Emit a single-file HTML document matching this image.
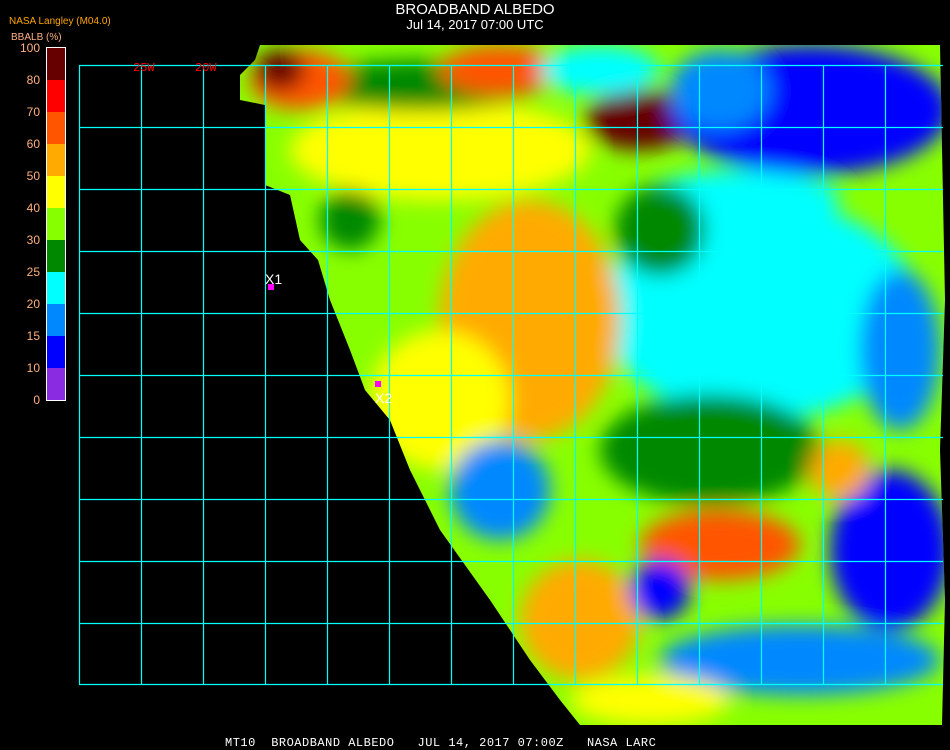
<!DOCTYPE html>
<html><head><style>
body{margin:0;background:#000;width:950px;height:750px;overflow:hidden;position:relative;font-family:"Liberation Sans",sans-serif}
.t{position:absolute;color:#fff;text-align:center;width:950px;left:0}
.lab{position:absolute;color:#ffb080;font-size:12px;text-align:right;width:40px;left:0}
</style></head><body>
<div class="t" style="top:1px;font-size:15px">BROADBAND ALBEDO</div>
<div class="t" style="top:17px;font-size:13px">Jul 14, 2017 07:00 UTC</div>
<div style="position:absolute;left:9px;top:16px;color:#ffa500;font-size:10px">NASA Langley (M04.0)</div>
<div style="position:absolute;left:11px;top:32px;color:#ffb080;font-size:10px">BBALB (%)</div>
<svg width="950" height="750" style="position:absolute;left:0;top:0">
<defs><filter id="b"><feGaussianBlur stdDeviation="10"/></filter>
<clipPath id="c"><polygon points="260,45 255,60 240,75 240,100 265,105 265,185 290,195 300,240 318,260 330,300 350,350 365,390 390,420 410,470 440,530 490,600 530,660 560,700 580,725 942,725 945,600 940,450 945,300 940,45"/></clipPath></defs>
<g clip-path="url(#c)">
<rect x="230" y="40" width="720" height="690" fill="#8f0"/>
<g filter="url(#b)">
<ellipse cx="440" cy="150" rx="150" ry="50" fill="#ff0"/>
<ellipse cx="420" cy="85" rx="120" ry="25" fill="#080"/>
<ellipse cx="300" cy="80" rx="50" ry="30" fill="#f50"/>
<ellipse cx="280" cy="70" rx="25" ry="20" fill="#600"/>
<ellipse cx="500" cy="70" rx="60" ry="25" fill="#f50"/>
<ellipse cx="640" cy="120" rx="55" ry="30" fill="#600"/>
<ellipse cx="600" cy="70" rx="60" ry="25" fill="#0ff"/>
<ellipse cx="810" cy="110" rx="140" ry="65" fill="#00f"/>
<ellipse cx="720" cy="90" rx="50" ry="40" fill="#08f"/>
<ellipse cx="760" cy="310" rx="160" ry="110" fill="#0ff"/>
<ellipse cx="740" cy="200" rx="100" ry="30" fill="#0ff"/>
<ellipse cx="900" cy="350" rx="40" ry="80" fill="#08f"/>
<ellipse cx="530" cy="320" rx="90" ry="120" fill="#fa0"/>
<ellipse cx="440" cy="400" rx="70" ry="70" fill="#ff0"/>
<ellipse cx="660" cy="230" rx="45" ry="45" fill="#080"/>
<ellipse cx="350" cy="220" rx="30" ry="30" fill="#080"/>
<ellipse cx="710" cy="450" rx="110" ry="55" fill="#080"/>
<ellipse cx="890" cy="550" rx="60" ry="80" fill="#00f"/>
<ellipse cx="720" cy="545" rx="80" ry="35" fill="#f50"/>
<ellipse cx="580" cy="620" rx="60" ry="60" fill="#fa0"/>
<ellipse cx="500" cy="490" rx="50" ry="50" fill="#08f"/>
<ellipse cx="660" cy="590" rx="30" ry="30" fill="#00f"/>
<ellipse cx="800" cy="660" rx="140" ry="35" fill="#08f"/>
<ellipse cx="650" cy="700" rx="80" ry="25" fill="#ff0"/>
<ellipse cx="840" cy="470" rx="30" ry="30" fill="#fa0"/>
</g>
</g>
<g stroke="#0ff" stroke-width="1.2" fill="none">
<path d="M79.5 65V684M141.5 65V684M203.5 65V684M265.5 65V684M327.5 65V684M389.5 65V684M451.5 65V684M513.5 65V684M575.5 65V684M637.5 65V684M699.5 65V684M761.5 65V684M823.5 65V684M885.5 65V684"/>
<path d="M79 65.5H943M79 127.5H943M79 189.5H943M79 251.5H943M79 313.5H943M79 375.5H943M79 437.5H943M79 499.5H943M79 561.5H943M79 623.5H943M79 684.5H943"/>
</g>
<g fill="#f00" font-size="12" font-family="Liberation Mono,monospace">
<text x="133" y="71">25W</text><text x="195" y="71">20W</text>
</g>
<rect x="46.5" y="47.5" width="19" height="353" fill="none" stroke="#fff"/>
<rect x="47" y="48" width="18" height="32" fill="#600"/>
<rect x="47" y="80" width="18" height="32" fill="#f00"/>
<rect x="47" y="112" width="18" height="32" fill="#f50"/>
<rect x="47" y="144" width="18" height="32" fill="#fa0"/>
<rect x="47" y="176" width="18" height="32" fill="#ff0"/>
<rect x="47" y="208" width="18" height="32" fill="#8f0"/>
<rect x="47" y="240" width="18" height="32" fill="#080"/>
<rect x="47" y="272" width="18" height="32" fill="#0ff"/>
<rect x="47" y="304" width="18" height="32" fill="#08f"/>
<rect x="47" y="336" width="18" height="32" fill="#00f"/>
<rect x="47" y="368" width="18" height="32" fill="#8a2be2"/>
<rect x="268" y="284" width="6" height="6" fill="#f0f"/>
<rect x="375" y="381" width="6" height="6" fill="#f0f"/>
<text x="265" y="284" fill="#fff" font-size="14">X1</text>
<text x="375" y="403" fill="#fff" font-size="14">X2</text>
</svg>
<div class="lab" style="top:41px">100</div>
<div class="lab" style="top:73px">80</div>
<div class="lab" style="top:105px">70</div>
<div class="lab" style="top:137px">60</div>
<div class="lab" style="top:169px">50</div>
<div class="lab" style="top:201px">40</div>
<div class="lab" style="top:233px">30</div>
<div class="lab" style="top:265px">25</div>
<div class="lab" style="top:297px">20</div>
<div class="lab" style="top:329px">15</div>
<div class="lab" style="top:361px">10</div>
<div class="lab" style="top:393px">0</div>
<div style="position:absolute;left:225px;top:736px;color:#fff;font-size:12px;font-family:'Liberation Mono',monospace;white-space:pre;letter-spacing:0.5px">MT10  BROADBAND ALBEDO   JUL 14, 2017 07:00Z   NASA LARC</div>
</body></html>
